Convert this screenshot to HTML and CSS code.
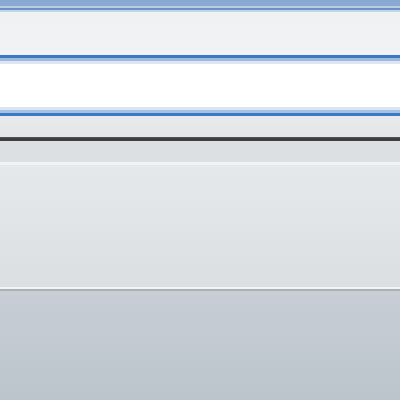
FILE: index.html
```html
<!DOCTYPE html>
<html>
<head>
<meta charset="utf-8">
<link rel="stylesheet" href="styles.css">
</head>
<body>
<div class="app">
  <div class="titlebar"></div>
  <div class="toolbar"></div>
  <div class="field"></div>
  <div class="gap"></div>
  <div class="divider"></div>
  <div class="panel"></div>
  <div class="footer"></div>
</div>
</body>
</html>
```
FILE: styles.css
```css
html, body { margin: 0; padding: 0; }
body { width: 400px; height: 400px; overflow: hidden; font-family: "Liberation Sans", sans-serif; }
.app { display: flex; flex-direction: column; height: 400px; }
.app > div { flex-shrink: 0; }
.titlebar {
  height: 6px;
  background: #8aa9d2;
  border-bottom: 2px solid #b9cce5;
}
.toolbar {
  height: 45px;
  background: linear-gradient(#f0f1f3, #f1f2f4);
  border-top: 2px solid #6b90c5;
  box-shadow: inset 0 2px 0 #c4d3e7;
}
.field {
  height: 55px;
  background: #fff;
  border-top: 3px solid #3a78c8;
  border-bottom: 3px solid #3a78c8;
  box-shadow: inset 0 3px 0 #9eb9dd, inset 0 6px 0 #dee7f1, inset 0 -3px 0 #a9c1e1, inset 0 -6px 0 #d9e5f2;
}
.gap { height: 21px; background: linear-gradient(#e8eaec, #e3e5e7); }
.divider { height: 4px; background: linear-gradient(#5a5a5a, #383838 50%, #444); }
.panel {
  height: 146px;
  background: linear-gradient(#dcdfe2 0, #dde0e3 21px, #e6e9eb 24px, #dcdfe2 100%);
  box-shadow: inset 0 21px 0 #dde0e3, inset 0 24px 0 #f0f2f3;
}
.footer {
  flex: 1;
  background: linear-gradient(#c8ced6, #bcc5cc);
  border-top: 2px solid #f2f3f4;
  box-shadow: inset 0 2px 0 #a9b1b7;
}
```
